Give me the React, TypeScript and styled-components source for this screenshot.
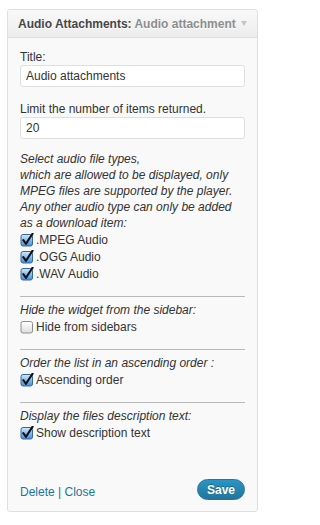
import React from 'react';
import styled, { createGlobalStyle } from 'styled-components';

const GlobalStyle = createGlobalStyle`
  html, body {
    margin: 0;
    padding: 0;
    background: #fff;
  }
  body {
    font-family: "Liberation Sans", Arial, sans-serif;
    font-size: 12px;
    color: #333;
  }
`;

const Widget = styled.div`
  width: 251px;
  box-sizing: border-box;
  margin: 9px 0 0 7px;
  border: 1px solid #dfdfdf;
  border-radius: 3px;
  background: #f9f9f9;
  overflow: hidden;
`;

const Header = styled.div`
  display: flex;
  align-items: center;
  height: 27px;
  padding: 0 10px;
  background: linear-gradient(to bottom, #f9f9f9, #ececec);
  border-bottom: 1px solid #dfdfdf;
`;

const HeaderTitle = styled.div`
  flex: 1;
  min-width: 0;
  white-space: nowrap;
  font-weight: bold;
  font-size: 12px;
  color: #464646;
  text-shadow: 0 1px 0 #fff;
`;

const Subtitle = styled.span`
  color: #8d8d8d;
`;

const Arrow = styled.span`
  width: 0;
  height: 0;
  margin-left: 8px;
  border-left: 3px solid transparent;
  border-right: 3px solid transparent;
  border-top: 5px solid #c4c4c4;
`;

const Body = styled.div`
  padding: 11px 12px;
`;

const Label = styled.div`
  line-height: 16px;
`;

const TextInput = styled.input<{ $mb: number }>`
  display: block;
  width: 100%;
  height: 22px;
  box-sizing: border-box;
  margin: 0 0 ${(p) => p.$mb}px;
  padding: 0 5px;
  border: 1px solid #dfdfdf;
  border-radius: 3px;
  background: #fff;
  font-family: "Liberation Sans", Arial, sans-serif;
  font-size: 12px;
  color: #333;
  outline: none;
`;

const Note = styled.div`
  font-style: italic;
  line-height: 16px;
  margin-bottom: 1px;
`;

const CheckRow = styled.label`
  display: flex;
  align-items: center;
  height: 17px;
  line-height: 17px;
`;

const BoxIcon = styled.svg`
  width: 14px;
  height: 14px;
  flex: none;
  margin-right: 2px;
  position: relative;
  top: -1px;
`;

const Rule = styled.hr`
  border: 0;
  border-top: 1px solid #b9b9b9;
  height: 0;
  margin: 13px 0 5px;
`;

const Footer = styled.div`
  display: flex;
  align-items: center;
  justify-content: space-between;
  margin-top: 37px;
  height: 21px;
`;

const Links = styled.div`
  color: #21759b;
  padding-top: 5px;
`;

const Link = styled.a`
  color: #21759b;
  text-decoration: none;
`;

const SaveButton = styled.button`
  height: 21px;
  padding: 0 9px;
  border: 1px solid #21759b;
  border-radius: 11px;
  background: linear-gradient(to bottom, #2a95c5, #21759b);
  color: #fff;
  font-family: "Liberation Sans", Arial, sans-serif;
  font-size: 12px;
  font-weight: bold;
  text-shadow: 0 -1px 0 rgba(0, 0, 0, 0.3);
  cursor: pointer;
`;

const Check = ({ checked }: { checked: boolean }) => (
  <BoxIcon viewBox="0 0 14 14">
    <defs>
      <linearGradient id="cbOn" x1="0" y1="0" x2="0" y2="1">
        <stop offset="0" stopColor="#d3eafc" />
        <stop offset="0.5" stopColor="#83bdf0" />
        <stop offset="1" stopColor="#3f8ede" />
      </linearGradient>
      <linearGradient id="cbOff" x1="0" y1="0" x2="0" y2="1">
        <stop offset="0" stopColor="#ffffff" />
        <stop offset="1" stopColor="#dedede" />
      </linearGradient>
    </defs>
    <rect
      x="1"
      y="1.5"
      width="11.5"
      height="11.5"
      rx="2"
      fill={checked ? 'url(#cbOn)' : 'url(#cbOff)'}
      stroke={checked ? '#3a6799' : '#8e8e8e'}
      strokeWidth="1"
    />
    {checked && (
      <path
        d="M3.3 7.2 L6 10.8 L12.6 0.6"
        fill="none"
        stroke="#111"
        strokeWidth="2.1"
        strokeLinecap="round"
        strokeLinejoin="round"
      />
    )}
  </BoxIcon>
);

const Option = ({ label, checked }: { label: string; checked: boolean }) => (
  <CheckRow>
    <Check checked={checked} />
    {label}
  </CheckRow>
);

export default function App() {
  return (
    <>
      <GlobalStyle />
      <Widget>
        <Header>
          <HeaderTitle>
            Audio Attachments: <Subtitle>Audio attachment</Subtitle>
          </HeaderTitle>
          <Arrow />
        </Header>
        <Body>
          <Label>Title:</Label>
          <TextInput $mb={14} defaultValue="Audio attachments" />
          <Label>Limit the number of items returned.</Label>
          <TextInput $mb={12} defaultValue="20" />

          <Note>
            Select audio file types,
            <br />
            which are allowed to be displayed, only MPEG files are supported by
            the player. Any other audio type can only be added as a download
            item:
          </Note>
          <Option label=".MPEG Audio" checked />
          <Option label=".OGG Audio" checked />
          <Option label=".WAV Audio" checked />

          <Rule />
          <Note>Hide the widget from the sidebar:</Note>
          <Option label="Hide from sidebars" checked={false} />

          <Rule />
          <Note>Order the list in an ascending order :</Note>
          <Option label="Ascending order" checked />

          <Rule />
          <Note>Display the files description text:</Note>
          <Option label="Show description text" checked />

          <Footer>
            <Links>
              <Link href="#">Delete</Link> | <Link href="#">Close</Link>
            </Links>
            <SaveButton>Save</SaveButton>
          </Footer>
        </Body>
      </Widget>
    </>
  );
}
